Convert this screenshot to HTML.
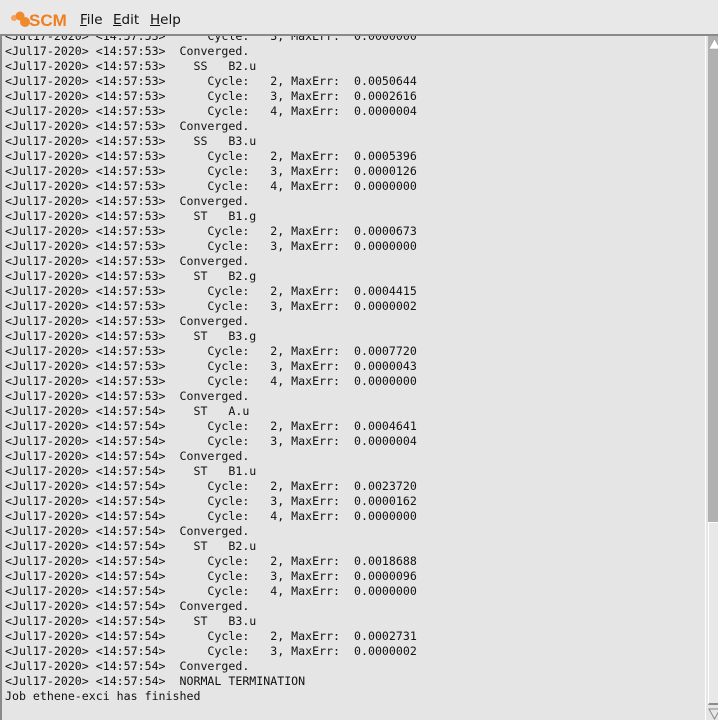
<!DOCTYPE html>
<html><head><meta charset="utf-8"><style>
body{margin:0;width:718px;height:720px;overflow:hidden;background:#e5e5e5;font-family:"Liberation Sans","DejaVu Sans",sans-serif;}
#bar{position:absolute;left:0;top:0;width:718px;height:34px;background:#e8e8e8;}
#bar .m{position:absolute;top:12px;font-size:13.5px;color:#111;font-family:"DejaVu Sans",sans-serif;}
#bar .m u{text-decoration:underline;}
#logo{position:absolute;left:10px;top:10px;}
#area{position:absolute;left:0;top:34px;width:718px;height:686px;border-top:2px solid #8a8a8a;border-left:2px solid #8a8a8a;box-sizing:border-box;overflow:hidden;background:#e5e5e5;}
pre{position:absolute;left:3px;top:-7px;margin:0;font-family:"DejaVu Sans Mono",monospace;font-size:11.6px;line-height:15px;color:#111;}
#sb{position:absolute;left:703px;top:0;width:15px;height:686px;background:#e5e5e5;border-left:1px solid #fff;}
#track{position:absolute;left:2px;top:0;width:13px;height:486px;background:#b1b1b1;}
#thumb{position:absolute;left:2px;top:486px;width:9px;height:180px;background:#e8e8e8;border:2px solid #8c8c8c;border-top:1px solid #fff;border-left:1px solid #fff;}
</style></head><body>
<div id="bar">
<svg id="logo" width="58" height="20" viewBox="0 0 58 20">
<circle cx="4" cy="8" r="3" fill="#f7a15a"/><circle cx="10" cy="6" r="4.5" fill="#f08a2c"/><circle cx="15" cy="12" r="5" fill="#f08a2c"/>
<text x="19" y="16" font-family="Liberation Sans,sans-serif" font-weight="bold" font-size="17" fill="#f07f1f">SCM</text>
</svg>
<span class="m" style="left:80px"><u>F</u>ile</span>
<span class="m" style="left:113px"><u>E</u>dit</span>
<span class="m" style="left:150px"><u>H</u>elp</span>
</div>
<div id="area">
<pre>&lt;Jul17-2020&gt; &lt;14:57:53&gt;      Cycle:   3, MaxErr:  0.0000000
&lt;Jul17-2020&gt; &lt;14:57:53&gt;  Converged.
&lt;Jul17-2020&gt; &lt;14:57:53&gt;    SS   B2.u
&lt;Jul17-2020&gt; &lt;14:57:53&gt;      Cycle:   2, MaxErr:  0.0050644
&lt;Jul17-2020&gt; &lt;14:57:53&gt;      Cycle:   3, MaxErr:  0.0002616
&lt;Jul17-2020&gt; &lt;14:57:53&gt;      Cycle:   4, MaxErr:  0.0000004
&lt;Jul17-2020&gt; &lt;14:57:53&gt;  Converged.
&lt;Jul17-2020&gt; &lt;14:57:53&gt;    SS   B3.u
&lt;Jul17-2020&gt; &lt;14:57:53&gt;      Cycle:   2, MaxErr:  0.0005396
&lt;Jul17-2020&gt; &lt;14:57:53&gt;      Cycle:   3, MaxErr:  0.0000126
&lt;Jul17-2020&gt; &lt;14:57:53&gt;      Cycle:   4, MaxErr:  0.0000000
&lt;Jul17-2020&gt; &lt;14:57:53&gt;  Converged.
&lt;Jul17-2020&gt; &lt;14:57:53&gt;    ST   B1.g
&lt;Jul17-2020&gt; &lt;14:57:53&gt;      Cycle:   2, MaxErr:  0.0000673
&lt;Jul17-2020&gt; &lt;14:57:53&gt;      Cycle:   3, MaxErr:  0.0000000
&lt;Jul17-2020&gt; &lt;14:57:53&gt;  Converged.
&lt;Jul17-2020&gt; &lt;14:57:53&gt;    ST   B2.g
&lt;Jul17-2020&gt; &lt;14:57:53&gt;      Cycle:   2, MaxErr:  0.0004415
&lt;Jul17-2020&gt; &lt;14:57:53&gt;      Cycle:   3, MaxErr:  0.0000002
&lt;Jul17-2020&gt; &lt;14:57:53&gt;  Converged.
&lt;Jul17-2020&gt; &lt;14:57:53&gt;    ST   B3.g
&lt;Jul17-2020&gt; &lt;14:57:53&gt;      Cycle:   2, MaxErr:  0.0007720
&lt;Jul17-2020&gt; &lt;14:57:53&gt;      Cycle:   3, MaxErr:  0.0000043
&lt;Jul17-2020&gt; &lt;14:57:53&gt;      Cycle:   4, MaxErr:  0.0000000
&lt;Jul17-2020&gt; &lt;14:57:53&gt;  Converged.
&lt;Jul17-2020&gt; &lt;14:57:54&gt;    ST   A.u
&lt;Jul17-2020&gt; &lt;14:57:54&gt;      Cycle:   2, MaxErr:  0.0004641
&lt;Jul17-2020&gt; &lt;14:57:54&gt;      Cycle:   3, MaxErr:  0.0000004
&lt;Jul17-2020&gt; &lt;14:57:54&gt;  Converged.
&lt;Jul17-2020&gt; &lt;14:57:54&gt;    ST   B1.u
&lt;Jul17-2020&gt; &lt;14:57:54&gt;      Cycle:   2, MaxErr:  0.0023720
&lt;Jul17-2020&gt; &lt;14:57:54&gt;      Cycle:   3, MaxErr:  0.0000162
&lt;Jul17-2020&gt; &lt;14:57:54&gt;      Cycle:   4, MaxErr:  0.0000000
&lt;Jul17-2020&gt; &lt;14:57:54&gt;  Converged.
&lt;Jul17-2020&gt; &lt;14:57:54&gt;    ST   B2.u
&lt;Jul17-2020&gt; &lt;14:57:54&gt;      Cycle:   2, MaxErr:  0.0018688
&lt;Jul17-2020&gt; &lt;14:57:54&gt;      Cycle:   3, MaxErr:  0.0000096
&lt;Jul17-2020&gt; &lt;14:57:54&gt;      Cycle:   4, MaxErr:  0.0000000
&lt;Jul17-2020&gt; &lt;14:57:54&gt;  Converged.
&lt;Jul17-2020&gt; &lt;14:57:54&gt;    ST   B3.u
&lt;Jul17-2020&gt; &lt;14:57:54&gt;      Cycle:   2, MaxErr:  0.0002731
&lt;Jul17-2020&gt; &lt;14:57:54&gt;      Cycle:   3, MaxErr:  0.0000002
&lt;Jul17-2020&gt; &lt;14:57:54&gt;  Converged.
&lt;Jul17-2020&gt; &lt;14:57:54&gt;  NORMAL TERMINATION
Job ethene-exci has finished</pre>
<div id="sb">
<div id="track"></div>
<svg style="position:absolute;left:2px;top:2px" width="13" height="12"><polygon points="6.5,1 12,11 1,11" fill="#fff" stroke="#999" stroke-width="0.5"/></svg>
<div id="thumb"></div>
<svg style="position:absolute;left:2px;top:672px" width="13" height="12"><polygon points="1,1 12,1 6.5,11" fill="#e8e8e8" stroke="#888" stroke-width="1"/></svg>
</div>
</div>
</body></html>
